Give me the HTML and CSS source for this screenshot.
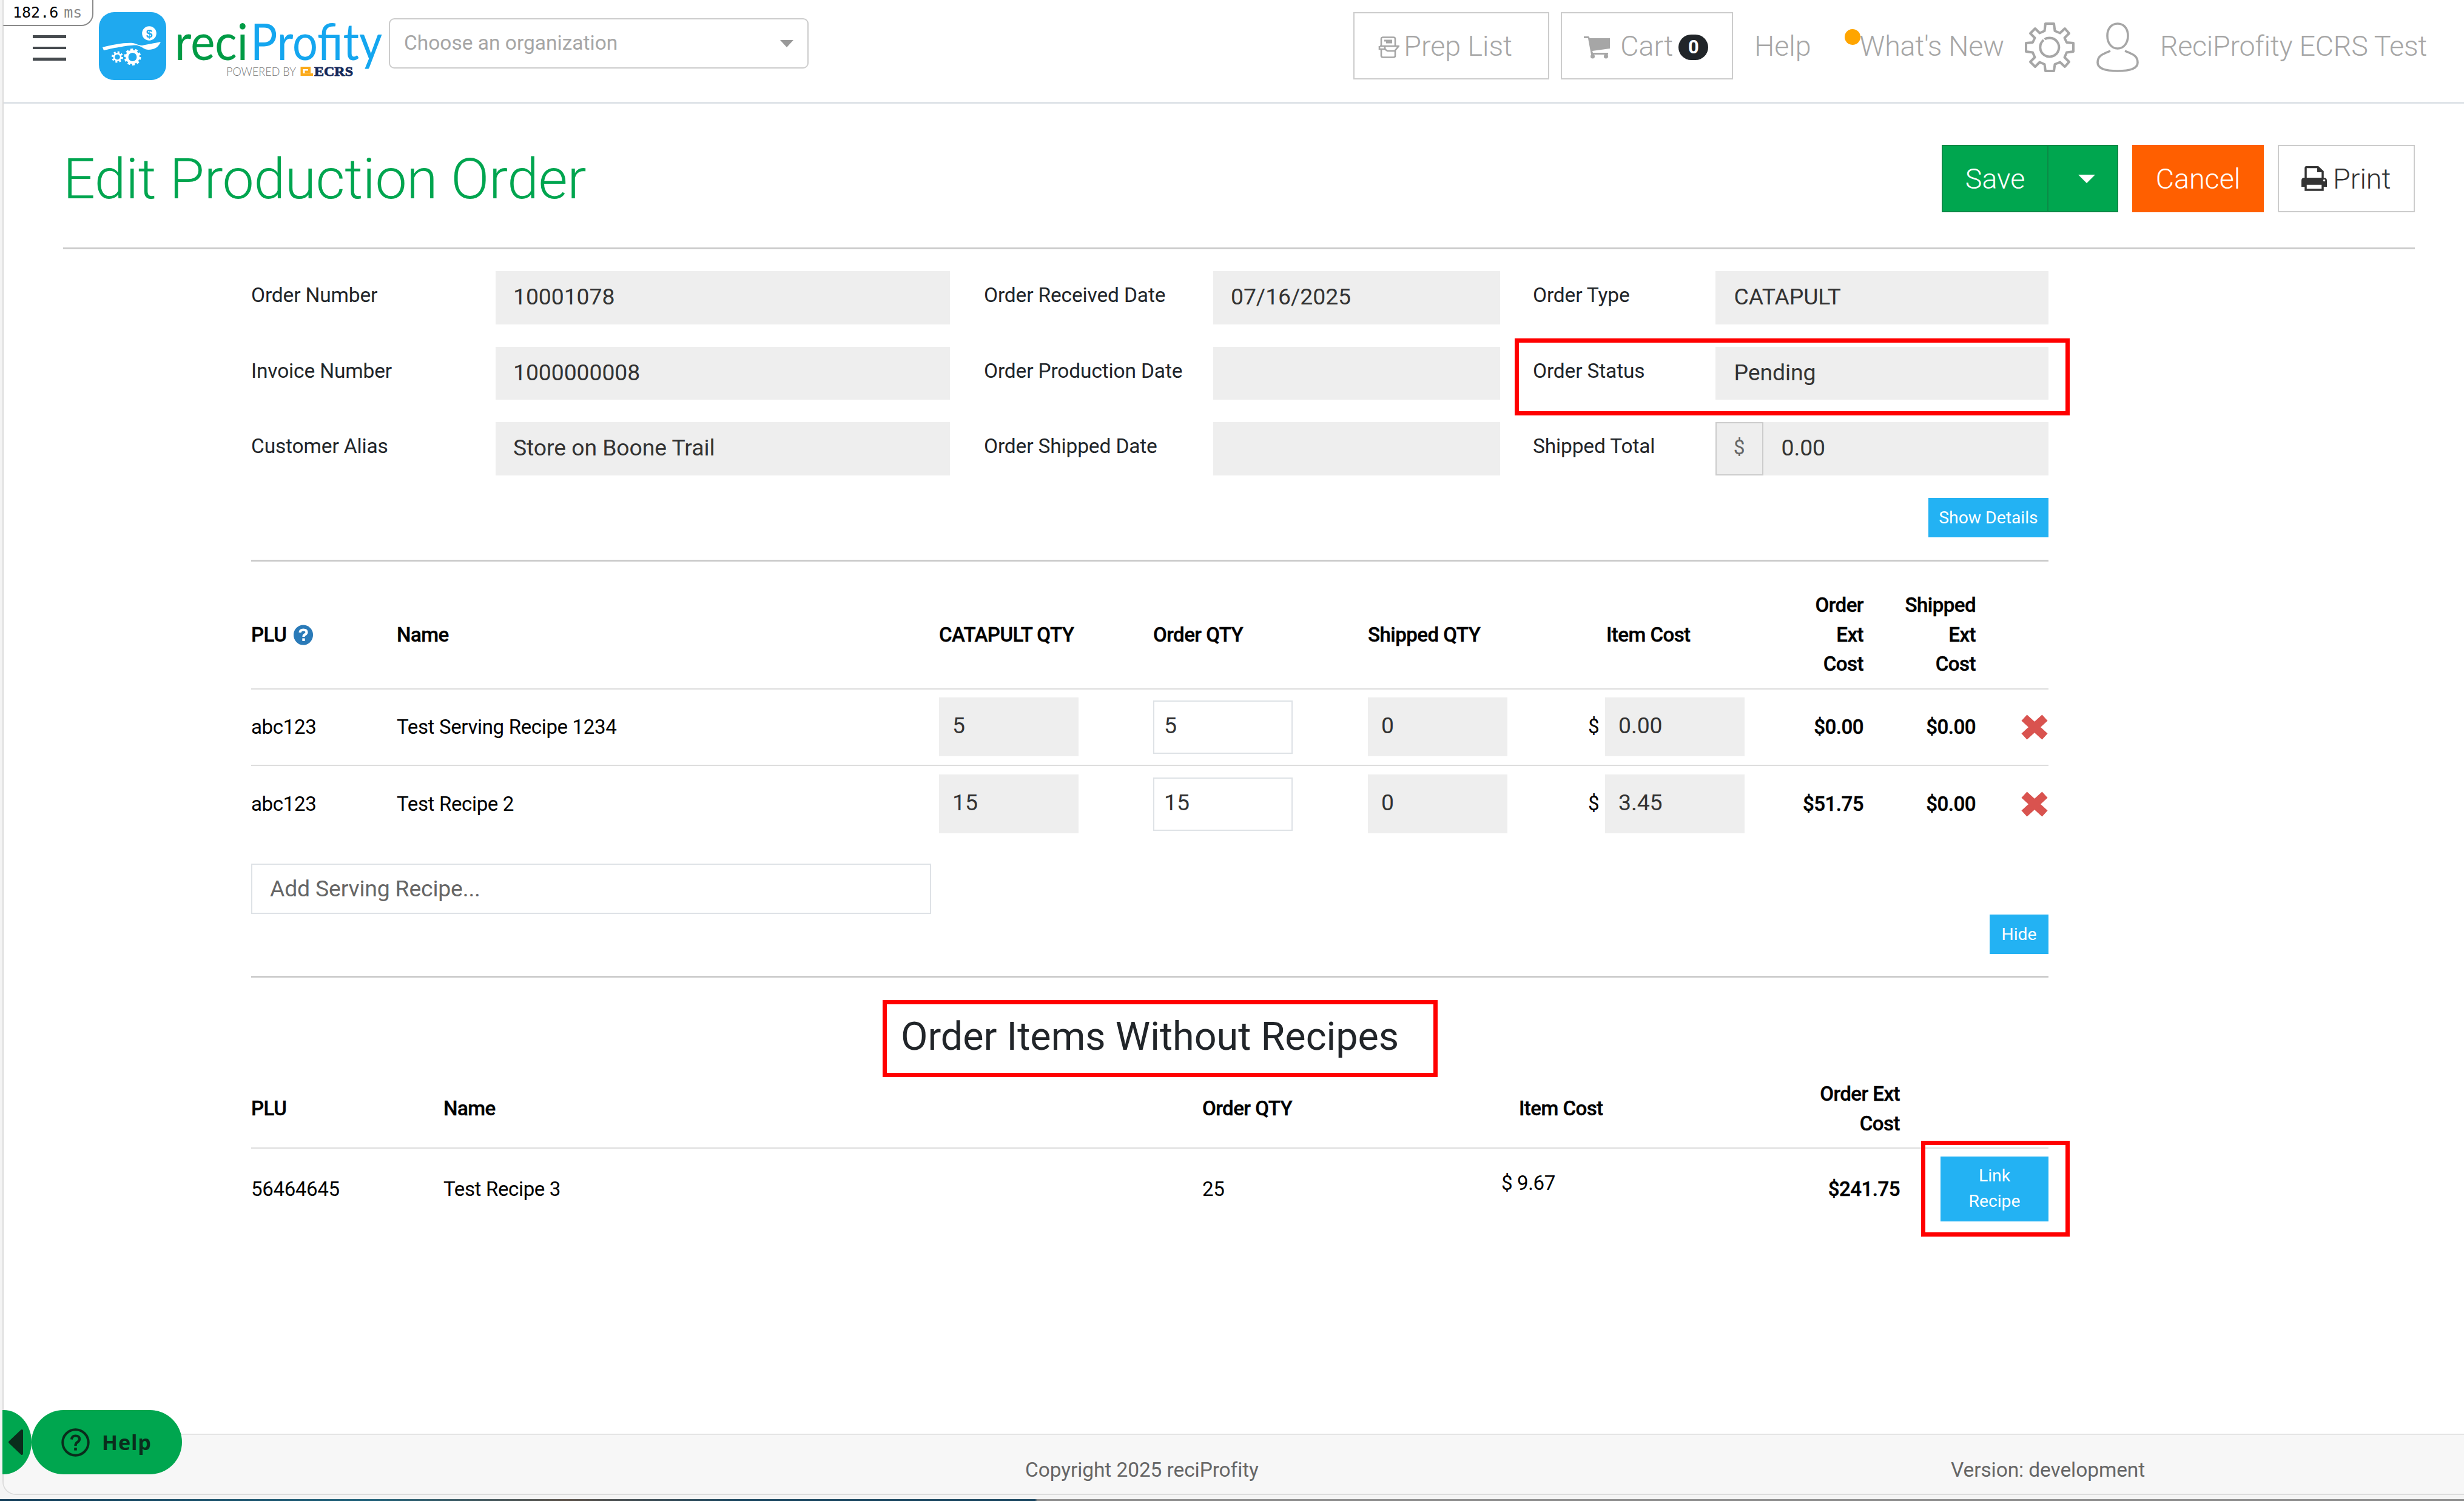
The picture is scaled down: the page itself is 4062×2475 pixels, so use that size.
FILE: index.html
```html
<!DOCTYPE html>
<html lang="en">
<head>
<meta charset="utf-8">
<title>Edit Production Order</title>
<link rel="stylesheet" href="styles.css">
</head>
<body>
<div class="window">
  <div class="timing">182.6 <span>ms</span></div>

  <header class="topbar">
    <div class="burger"><i></i><i></i><i></i></div>
    <svg class="logo" width="470" height="115" viewBox="0 0 470 115">
      <rect x="0" y="0" width="111" height="112" rx="25" fill="#1fa9ef"/>
      <path d="M6 58 C22 54 42 50 56 51 C62 52 66 55 71 55 L102 49 C98 58 92 62 82 62 C74 62 72 57 64 55 C58 53 30 58 8 63 Z" fill="#fff"/>
      <circle cx="83" cy="35" r="11.8" fill="#fff"/>
      <text class="coin" x="83" y="42" text-anchor="middle">$</text>
      <circle cx="55.5" cy="74" r="9.2" fill="none" stroke="#fff" stroke-width="4.5"/>
      <circle cx="55.5" cy="74" r="12" fill="none" stroke="#fff" stroke-width="4" stroke-dasharray="4.2 3.34"/>
      <circle cx="30.5" cy="74" r="5.6" fill="none" stroke="#fff" stroke-width="2.6"/>
      <circle cx="30.5" cy="74" r="8" fill="none" stroke="#fff" stroke-width="3" stroke-dasharray="3.2 3.08"/>
      <text class="brand reci" x="125" y="79" textLength="121" lengthAdjust="spacingAndGlyphs">reci</text>
      <text class="brand prof" x="250" y="79" textLength="217" lengthAdjust="spacingAndGlyphs">Profity</text>
      <text class="powered" x="210" y="105" textLength="115" lengthAdjust="spacingAndGlyphs">POWERED BY</text>
      <path d="M353 103 H334.500 V92 H347 V98.500 H339.500" fill="none" stroke="#fba919" stroke-width="4"/>
      <text class="ecrs" x="355" y="105" textLength="64" lengthAdjust="spacingAndGlyphs">ECRS</text>
    </svg>
    <div class="select"><span>Choose an organization</span><b></b></div>
    <nav class="menu">
      <a class="nav-btn prep">
        <svg width="35" height="36" viewBox="0 0 35 36" fill="none" stroke="#a6a6a6" stroke-width="2.600"><path d="M5 17 V4 Q5 1.500 8 1.500 H25 Q28 1.500 28 4 V15 M3 16 H34 L28 23 V32 Q28 34.500 25 34.500 H8 Q5 34.500 5 32 V22 M2 16 V21 H11 V16 M11 20 Q13 24 17 24 H27"/><path d="M10 7 H23 M13 10 H23" stroke-width="3"/></svg>
        <span>Prep List</span></a>
      <a class="nav-btn cart">
        <svg width="44" height="38" viewBox="0 0 44 38" fill="#a6a6a6"><path d="M0 1 H8 L10 4 H43 V21 L14 25 L15 28 H40 V31 H12 L7 4 H0 Z"/><circle cx="14.500" cy="34" r="3.500"/><circle cx="36.500" cy="34" r="3.500"/></svg>
        <span>Cart</span><em>0</em></a>
      <a class="help">Help</a>
      <a class="news">What's New</a>
      <svg class="gear" width="82" height="82" viewBox="0 0 82 82" fill="none" stroke="#a6a6a6" stroke-width="4"><path d="M34 2 H48 L49.500 14 L58 17.500 L66 10 L73 18 L65.500 25.500 L69 33 L80 34 V48 L69 49.500 L65.500 57.500 L73 65 L66 73 L58 65.500 L49.500 69 L48 80 H34 L32.500 69 L24.500 65.500 L17 73 L9 65 L16.500 57.500 L13 49.500 L2 48 V34 L13 33 L16.500 25.500 L9 18 L17 10 L24.500 17.500 L32.500 14 Z" stroke-linejoin="round"/><path d="M31 29 A15.500 15.500 0 1 0 41 25.500 Q35 25.500 33 28"/></svg>
      <svg class="user" width="70" height="82" viewBox="0 0 70 82" fill="none" stroke="#a6a6a6" stroke-width="3.600"><path d="M35 2 C46 2 52 11 52 22 C52 34 45 43 35 43 C25 43 18 34 18 22 C18 11 24 2 35 2 Z M23 47 C10 52 2 55 2 66 C2 76 14 80 35 80 C56 80 68 76 68 66 C68 55 60 52 47 47"/></svg>
      <a class="account">ReciProfity ECRS Test</a>
    </nav>
  </header>

  <main>
    <div class="title-row">
      <h1>Edit Production Order</h1>
      <div class="actions">
        <div class="save"><span>Save</span><b><i></i></b></div>
        <div class="cancel">Cancel</div>
        <div class="print">
          <svg width="44" height="41" viewBox="0 0 44 41"><path d="M8 20 V3 Q8 1.500 10 1.500 H28 L36 9 V20" fill="#fff" stroke="#333" stroke-width="3.500"/><path d="M27 2 V10 H36 Z" fill="#333"/><path d="M1 34 V24 Q1 19 6 19 H38 Q43 19 43 24 V34 Z" fill="#333"/><path d="M8 29 H36 V39 H8 Z" fill="#fff" stroke="#333" stroke-width="3.500"/><circle cx="38.500" cy="23.500" r="1.700" fill="#fff"/></svg>
          <span>Print</span></div>
      </div>
    </div>

    <div class="sheet">
      <section class="form">
        <label>Order Number</label><div class="field">10001078</div>
        <label>Order Received Date</label><div class="field mid">07/16/2025</div>
        <label>Order Type</label><div class="field last">CATAPULT</div>
        <label>Invoice Number</label><div class="field">1000000008</div>
        <label>Order Production Date</label><div class="field"></div>
        <label>Order Status</label><div class="field last">Pending</div>
        <label>Customer Alias</label><div class="field">Store on Boone Trail</div>
        <label>Order Shipped Date</label><div class="field"></div>
        <label>Shipped Total</label><div class="field money"><i>$</i><span>0.00</span></div>
      </section>
      <div class="right"><button>Show Details</button></div>

      <section class="items">
        <div class="row head">
          <span class="plu">PLU <svg width="32" height="34" viewBox="0 0 32 34"><ellipse cx="16" cy="17" rx="16" ry="16.500" fill="#2a7ab8"/><path d="M10.500 13 Q11 8.500 16 8.500 Q21.500 8.500 21.500 12.500 Q21.500 15 18.500 16.500 Q16.500 17.500 16.500 20" fill="none" stroke="#fff" stroke-width="4.200"/><rect x="14.300" y="22.500" width="4.400" height="4.400" fill="#fff"/></svg></span>
          <span>Name</span><span>CATAPULT QTY</span><span>Order QTY</span><span>Shipped QTY</span><span class="ic">Item Cost</span><span class="num">Order<br>Ext<br>Cost</span><span class="num">Shipped<br>Ext<br>Cost</span><span></span>
        </div>
        <div class="row">
          <span>abc123</span><span>Test Serving Recipe 1234</span>
          <div class="qty">5</div><div class="qty edit">5</div><div class="qty">0</div>
          <div class="cost"><i>$</i><div class="qty">0.00</div></div>
          <span class="num bold">$0.00</span><span class="num bold">$0.00</span>
          <svg class="del" width="46" height="44" viewBox="0 0 46 44"><path d="M6 6.500 L40 37.500 M40 6.500 L6 37.500" stroke="#d9534f" stroke-width="13.500"/></svg>
        </div>
        <div class="row">
          <span>abc123</span><span>Test Recipe 2</span>
          <div class="qty">15</div><div class="qty edit">15</div><div class="qty">0</div>
          <div class="cost"><i>$</i><div class="qty">3.45</div></div>
          <span class="num bold">$51.75</span><span class="num bold">$0.00</span>
          <svg class="del" width="46" height="44" viewBox="0 0 46 44"><path d="M6 6.500 L40 37.500 M40 6.500 L6 37.500" stroke="#d9534f" stroke-width="13.500"/></svg>
        </div>
      </section>
      <div class="add">Add Serving Recipe...</div>
      <div class="right hide"><button>Hide</button></div>

      <section class="orphans">
        <h2>Order Items Without Recipes</h2>
        <div class="row2 head">
          <span>PLU</span><span>Name</span><span>Order QTY</span><span class="oc">Item Cost</span><span class="num">Order Ext<br>Cost</span><span></span>
        </div>
        <div class="row2 body">
          <span>56464645</span><span>Test Recipe 3</span><span>25</span><span class="price">$ 9.67</span><span class="num bold">$241.75</span><button class="link">Link<br>Recipe</button>
        </div>
      </section>
    </div>
  </main>

  <footer><span class="copy">Copyright 2025 reciProfity</span><span class="ver">Version: development</span></footer>

  <div class="mark status"></div>
  <div class="mark heading"></div>
  <div class="mark linkbox"></div>

  <div class="help-tab"><svg width="26" height="44" viewBox="0 0 26 44"><path d="M23 3 V41 L3 22 Z" fill="#0a2d1c" stroke="#0a2d1c" stroke-width="4" stroke-linejoin="round"/></svg></div>
  <div class="help-pill">
    <svg width="47" height="47" viewBox="0 0 47 47" fill="none" stroke="#0a2d1c"><circle cx="23.500" cy="23.500" r="21.200" stroke-width="4"/><path d="M17 18.500 Q17.500 12.500 23.500 12.500 Q30 12.500 30 18 Q30 21 26.500 23 Q23.500 25 23.500 29" stroke-width="4.200"/><rect x="21.200" y="32" width="4.600" height="4.600" fill="#0a2d1c" stroke="none"/></svg>
    <span>Help</span>
  </div>
</div>
<div class="desktop"></div>
</body>
</html>
```
FILE: styles.css
```css
* { box-sizing: border-box; }
body {
  margin: 0;
  width: 4062px;
  height: 2475px;
  overflow: hidden;
  background: #f4f4f4;
  font-family: Roboto, "Liberation Sans", sans-serif;
  font-size: 33.5px;
  color: #212529;
  display: flex;
  flex-direction: column;
}
i, em { font-style: normal; }
svg { display: block; flex: none; }
h1, h2 { margin: 0; }

.window {
  position: relative;
  margin-left: 4px;
  height: 2465px;
  flex: none;
  background: #fff;
  border: 2px solid #dcdcdc;
  border-top: 0;
  border-right: 0;
  border-bottom-left-radius: 22px;
  display: flex;
  flex-direction: column;
}
.desktop {
  margin-top: auto;
  height: 3px;
  flex: none;
  background: linear-gradient(90deg, #123c58, #1d5f78 15%, #5a5048 23%, #17445e 30%, #17445e 42%, #8c8c8c 42.1%);
}

.timing {
  position: absolute;
  left: -2px;
  top: -3px;
  width: 150px;
  height: 46px;
  padding-left: 15px;
  border: 2px solid #8a8a8a;
  border-left-color: #ddd;
  border-radius: 0 0 20px 0;
  background: #fff;
  font: 25px/43px "DejaVu Sans Mono", monospace;
  color: #000;
  white-space: pre;
}
.timing span { color: #888; margin-left: -6px; }

.topbar {
  height: 171px;
  flex: none;
  border-bottom: 3px solid #dfe4e8;
  display: flex;
  align-items: flex-start;
}
.burger {
  margin: 58px 0 0 48px;
  width: 55px;
  display: flex;
  flex-direction: column;
  gap: 14px;
}
.burger i { height: 4.6px; background: #454a4e; }
.logo { margin: 20px 0 0 54px; overflow: visible; }
.coin { font: 700 19px "Liberation Sans", sans-serif; fill: #1fa9ef; }
.brand { font-family: Lato, sans-serif; font-size: 83px; }
.reci { fill: #009b45; }
.prof { fill: #14a6ef; }
.powered { font: 300 20px Lato, sans-serif; fill: #777; }
.ecrs { font: 700 22px "Liberation Serif", serif; fill: #14285a; stroke: #14285a; stroke-width: .8px; }

.select {
  margin: 30px 0 0 8px;
  width: 692px;
  height: 83px;
  border: 2.6px solid #ccc;
  border-radius: 9px;
  padding: 0 23px;
  display: flex;
  align-items: center;
  justify-content: space-between;
  line-height: 74px;
  color: #a6a6a6;
}
.select span { margin-top: -2px; }
.select b {
  border: 11px solid transparent;
  border-top: 12px solid #999;
  border-bottom: 0;
}

.menu {
  flex: 1;
  display: flex;
  margin: 20px 61px 0 0;
  justify-content: flex-end;
  font-size: 46.6px;
  font-weight: 300;
  line-height: 112px;
  color: #a6a6a6;
  white-space: nowrap;
}
.menu a { flex: none; }
.nav-btn {
  height: 111px;
  border: 2.6px solid #ccc;
  display: flex;
  align-items: center;
}
.nav-btn svg { margin-top: 4px; }
.prep { width: 323px; padding-left: 39px; gap: 7px; }
.cart { width: 284px; margin-left: 19px; padding-left: 36px; }
.cart span { margin-left: 16px; }
.cart em {
  margin: 5px 0 0 9px;
  width: 49px;
  height: 42px;
  border-radius: 24px;
  background: #212529;
  color: #fff;
  font: 700 31px/42px Roboto, sans-serif;
  text-align: center;
}
.help { margin-left: 35px; }
.news { position: relative; margin-left: 80px; letter-spacing: -.25px; }
.news::before {
  content: "";
  position: absolute;
  left: -25px;
  top: 28px;
  width: 26px;
  height: 26px;
  border-radius: 50%;
  background: #ffa500;
}
.gear { margin: 17px 0 0 34px; }
.user { margin: 17px 0 0 36px; }
.account { margin-left: 35px; letter-spacing: -.25px; }

main { flex: 1; padding: 68px 81px 0 98px; }
.title-row {
  height: 172px;
  border-bottom: 3px solid #ccc;
  display: flex;
  justify-content: space-between;
}
h1 {
  font-size: 93.2px;
  font-weight: 300;
  line-height: 113px;
  letter-spacing: -.4px;
  color: #00a54f;
}
.actions {
  display: flex;
  gap: 23px;
  font-size: 46.6px;
  font-weight: 300;
  line-height: 108px;
}
.actions > div { height: 111px; display: flex; }
.save {
  width: 291px;
  background: #00a64f;
  border: 2.6px solid #0b8a46;
  color: #fff;
}
.save span { width: 174px; text-align: center; border-right: 2px solid #0b8a46; }
.save b { flex: 1; display: flex; align-items: center; justify-content: center; padding-left: 12px; }
.save i { border: 14px solid transparent; border-top: 14px solid #fff; border-bottom: 0; }
.cancel { width: 217px; background: #ff5f00; color: #fff; justify-content: center; line-height: 112px; }
.print { width: 226px; border: 2.6px solid #ccc; color: #333; padding-left: 36px; gap: 9px; align-items: center; }

.sheet { width: 2963px; margin-left: 310px; }
.form {
  display: grid;
  grid-template-columns: 403px 749px 434px 473px 354.5px 549.5px;
  grid-auto-rows: 87.5px;
  row-gap: 37px;
  padding-top: 36px;
}
.form label { line-height: 79px; white-space: nowrap; letter-spacing: -.15px; }
.form label:nth-of-type(3n+2) { padding-left: 56px; }
.form label:nth-of-type(3n) { padding-left: 54px; }
.field {
  background: #eee;
  padding-left: 29px;
  font-size: 37.4px;
  line-height: 85px;
  letter-spacing: -.1px;
  color: #333;
}
.field.last { padding-left: 31px; }
.field.money { padding: 0; display: flex; }
.money i {
  width: 79px;
  border: 2.6px solid #ccc;
  font-size: 33.5px;
  line-height: 80px;
  text-align: center;
  color: #666;
}
.money span { margin-left: 30px; }

button {
  display: block;
  height: 65px;
  padding: 0;
  border: 0;
  background: #23b2f3;
  color: #fff;
  font: 28.3px/63px Roboto, sans-serif;
}
.right { display: flex; justify-content: flex-end; }
.right button { width: 198px; margin-top: 37px; }

.items, .orphans { border-top: 3px solid #ccc; color: #000; font-size: 33.1px; letter-spacing: -.38px; }
.items { margin-top: 37px; }
.row {
  display: grid;
  grid-template-columns: 240px 894px 353px 354px 365px 256px 196px 185px 120px;
  height: 126.7px;
  border-top: 2.6px solid #ddd;
  align-items: center;
}
.row.head { height: 209px; border: 0; line-height: 48.6px; padding-top: 34px; }
.head, .bold { font-weight: 500; letter-spacing: -.55px; -webkit-text-stroke: .4px #000; }
.plu { display: flex; gap: 12px; align-items: center; }
.ic { padding-left: 28px; }
.num { text-align: right; }
.qty {
  width: 230px;
  height: 97px;
  background: #eee;
  padding-left: 22px;
  font-size: 37.4px;
  line-height: 93px;
  letter-spacing: -.1px;
  color: #333;
}
.edit { height: 88px; line-height: 79px; background: #fff; border: 2.6px solid #dee2e6; padding-left: 16px; }
.cost { display: flex; align-items: center; margin-left: -2px; }
.cost i { width: 28px; margin-top: -3px; }
.del { justify-self: end; }
.add {
  width: 1121px;
  height: 83px;
  margin-top: 36px;
  border: 2.6px solid #dee2e6;
  padding-left: 29px;
  font-size: 37.4px;
  line-height: 78px;
  letter-spacing: -.2px;
  color: #666;
}
.hide button { width: 97px; margin-top: 1px; }

.orphans { margin-top: 36px; }
h2 {
  font-size: 64.7px;
  font-weight: 400;
  line-height: 78px;
  letter-spacing: 0;
  color: #212529;
  margin: 58px 0 0 1071px;
}
.row2 {
  display: grid;
  grid-template-columns: 317px 1251px 493px 200px 457px 245px;
  align-items: center;
}
.row2.head { height: 144.5px; line-height: 48.6px; padding-top: 17px; }
.row2.body { height: 134px; border-top: 2.6px solid #ddd; }
.oc { padding-left: 29px; white-space: nowrap; }
.price { margin-top: -19px; }
.link { width: 178px; height: 107px; line-height: 42px; justify-self: end; }

footer {
  height: 99px;
  flex: none;
  background: #f7f7f7;
  border-top: 2.6px solid #e4e4e4;
  border-bottom-left-radius: 20px;
  display: flex;
  line-height: 115px;
  letter-spacing: -.1px;
  color: #666;
}
.copy { margin-left: 1684px; width: 1526px; }

.mark { position: absolute; border: 7px solid #f00; }
.status { left: 2491px; top: 558px; width: 915px; height: 127px; }
.heading { left: 1449px; top: 1649px; width: 915px; height: 127px; }
.linkbox { left: 3161px; top: 1881px; width: 245px; height: 158px; }

.help-tab, .help-pill {
  position: absolute;
  top: 2325px;
  height: 106px;
  background: #00a64f;
  display: flex;
  align-items: center;
}
.help-tab { left: -2px; width: 48px; border-radius: 0 46px 46px 0 / 0 53px 53px 0; padding-left: 9px; }
.help-pill { left: 46px; width: 248px; border-radius: 53px; padding-left: 49px; gap: 20px; }
.help-pill span { font: 700 34px/106px "Noto Sans", sans-serif; color: #0a2d1c; letter-spacing: 1px; }
```
